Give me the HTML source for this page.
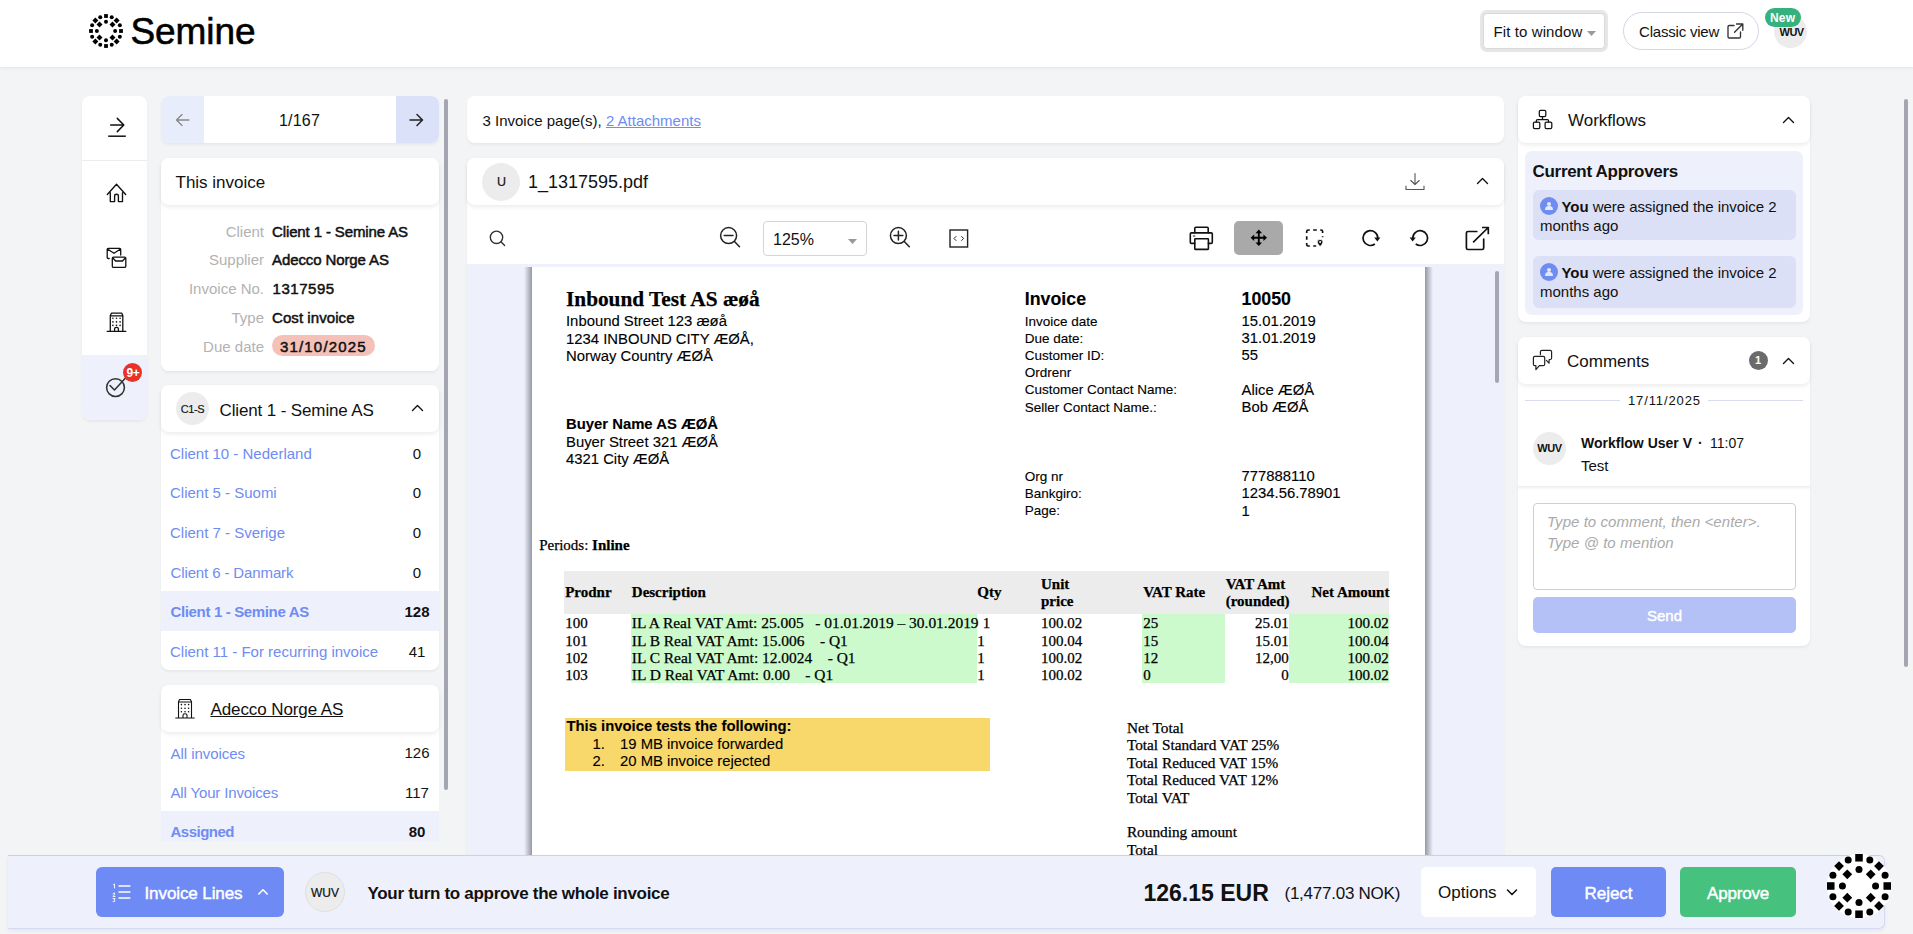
<!DOCTYPE html>
<html><head><meta charset="utf-8">
<style>
*{box-sizing:border-box;margin:0;padding:0}
html,body{width:1913px;height:934px;overflow:hidden;background:#f3f4f6;font-family:"Liberation Sans",sans-serif;color:#111}
.abs{position:absolute}
.t{position:absolute;white-space:nowrap;line-height:1}
.card{position:absolute;background:#fff;border-radius:8px;box-shadow:0 2px 3px rgba(0,0,0,0.05)}
.hc{position:absolute;background:#fff;border-radius:8px;box-shadow:0 2px 4px rgba(0,0,0,0.08)}
#hdr{position:absolute;left:0;top:0;width:1913px;height:67px;background:#fff;box-shadow:0 1px 3px rgba(0,0,0,0.07)}
svg{display:block;position:absolute;overflow:visible}
.ic{fill:none;stroke:#111;stroke-width:1.2;stroke-linecap:round;stroke-linejoin:round}
.p{position:absolute;white-space:nowrap;line-height:1;color:#000}
.ps{font-family:"Liberation Sans",sans-serif;-webkit-text-stroke:0.12px #000}
.pr{font-family:"Liberation Serif",serif;-webkit-text-stroke:0.25px #000}
.lbl{color:#b2b2b2;font-size:15px;text-align:right;width:100px}
.val{font-size:15px;color:#111;-webkit-text-stroke:0.5px #111}
.lnk{color:#6e8cf2;font-size:15px}
.cnt{font-size:15px;color:#111;text-align:center;width:40px}
</style></head><body>

<!-- HEADER -->
<div id="hdr">
  <svg style="left:89px;top:14px" width="34" height="34" viewBox="-17 -17 34 34"><g><rect x="-1.90" y="-16.90" width="3.8" height="3.8"/><circle cx="5.74" cy="-13.86" r="2.0"/><path d="M10.61 -13.61L13.61 -10.61L10.61 -7.61L7.61 -10.61Z"/><circle cx="13.86" cy="-5.74" r="2.0"/><rect x="13.10" y="-1.90" width="3.8" height="3.8"/><circle cx="13.86" cy="5.74" r="2.0"/><path d="M10.61 7.61L13.61 10.61L10.61 13.61L7.61 10.61Z"/><circle cx="5.74" cy="13.86" r="2.0"/><rect x="-1.90" y="13.10" width="3.8" height="3.8"/><circle cx="-5.74" cy="13.86" r="2.0"/><path d="M-10.61 7.61L-7.61 10.61L-10.61 13.61L-13.61 10.61Z"/><circle cx="-13.86" cy="5.74" r="2.0"/><rect x="-16.90" y="-1.90" width="3.8" height="3.8"/><circle cx="-13.86" cy="-5.74" r="2.0"/><path d="M-10.61 -13.61L-7.61 -10.61L-10.61 -7.61L-13.61 -10.61Z"/><circle cx="-5.74" cy="-13.86" r="2.0"/><circle cx="0.00" cy="-9.15" r="2.0"/><path d="M6.47 -9.47L9.47 -6.47L6.47 -3.47L3.47 -6.47Z"/><circle cx="9.15" cy="-0.00" r="2.0"/><path d="M6.47 3.47L9.47 6.47L6.47 9.47L3.47 6.47Z"/><circle cx="0.00" cy="9.15" r="2.0"/><path d="M-6.47 3.47L-3.47 6.47L-6.47 9.47L-9.47 6.47Z"/><circle cx="-9.15" cy="0.00" r="2.0"/><path d="M-6.47 -9.47L-3.47 -6.47L-6.47 -3.47L-9.47 -6.47Z"/></g></svg>
  <div class="t" style="left:130.5px;top:13px;font-size:37px;color:#000;-webkit-text-stroke:0.6px #000;letter-spacing:-0.1px">Semine</div>

  <div class="abs" style="left:1480px;top:10px;width:128px;height:42px;border-radius:7px;background:#e6e6e6"></div>
  <div class="abs" style="left:1483px;top:13px;width:122px;height:36px;border-radius:4px;background:#fff;border:1px solid #d9d9d9"></div>
  <div class="t" style="left:1493.5px;top:24px;font-size:15px;letter-spacing:0.1px">Fit to window</div>
  <svg style="left:1587px;top:31px" width="9" height="5"><path d="M0 0H9L4.5 5Z" fill="#999"/></svg>

  <div class="abs" style="left:1623px;top:12px;width:136px;height:38px;border-radius:19px;border:1px solid #d3d7e6;background:#fff"></div>
  <div class="t" style="left:1639px;top:23.5px;font-size:15px;letter-spacing:-0.2px">Classic view</div>
  <svg class="ic" style="left:1727px;top:23px" width="17" height="16" viewBox="0 0 17 16"><path d="M7 2.5H2.2Q1 2.5 1 3.7V13.8Q1 15 2.2 15H12.3Q13.5 15 13.5 13.8V9" stroke="#333" stroke-width="1.35"/><path d="M9.5 1H15.8V7.3M15.5 1.3L7.5 9.3" stroke="#333" stroke-width="1.35"/></svg>

  <div class="abs" style="left:1774px;top:15px;width:33px;height:33px;border-radius:50%;background:#ececec"></div>
  <div class="t" style="left:1779.5px;top:27px;font-size:11px;font-weight:bold;letter-spacing:-0.5px">WUV</div>
  <div class="abs" style="left:1765px;top:8px;width:36px;height:19px;border-radius:10px;background:#36b07c"></div>
  <div class="t" style="left:1770px;top:12px;font-size:12px;font-weight:bold;color:#fff;letter-spacing:0.2px">New</div>
</div>

<!-- LEFT ICON SIDEBAR -->
<div class="card" style="left:82px;top:96px;width:65px;height:324px;overflow:hidden">
  <div class="abs" style="left:0;top:64px;width:65px;height:1px;background:#ececec"></div>
  <div class="abs" style="left:0;top:259px;width:65px;height:65px;background:#eef0fb"></div>
</div>
<svg class="ic" style="left:100px;top:110px" width="35" height="35" viewBox="0 0 35 35"><path d="M8.2 26.2H25.8" stroke-width="1.5" stroke-linecap="butt"/><path d="M10.7 15H23.8M17.3 8.4L23.8 15L17.3 21.6" stroke-width="1.5"/></svg>
<svg class="ic" style="left:100px;top:175px" width="35" height="35" viewBox="0 0 35 35"><path d="M7.3 19.5L16.5 9.2L25.7 19.5M10.3 17.6V26.6H14.6V21Q14.6 19.2 16.5 19.2Q18.4 19.2 18.4 21V26.6H22.5V17.6" stroke-width="1.35"/></svg>
<svg class="ic" style="left:100px;top:240px" width="35" height="35" viewBox="0 0 35 35"><path d="M9.2 18.5H8.2Q7.2 18.5 7.2 17.5V9.3Q7.2 8.3 8.2 8.3H19.7Q20.7 8.3 20.7 9.3V15M7.4 9L14 13.3L20.5 9" stroke-width="1.3"/><rect x="12.3" y="17.1" width="13.5" height="10.3" rx="1.2" stroke-width="1.3"/><path d="M12.6 17.7L15.6 21H22.5L25.5 17.7" stroke-width="1.3"/></svg>
<svg class="ic" style="left:100px;top:305px" width="35" height="35" viewBox="0 0 35 35"><path d="M7.2 26.4H25.8M10.3 26.4V10.5L11.4 8.2H21.8L22.8 10.5V26.4M10.5 10.8H22.6M14.6 26.4V23.8Q14.6 22.3 16.5 22.3Q18.4 22.3 18.4 23.8V26.4" stroke-width="1.3"/><g fill="#111" stroke="none"><circle cx="12.9" cy="13.3" r="0.8"/><circle cx="16.5" cy="13.3" r="0.8"/><circle cx="20.1" cy="13.3" r="0.8"/><circle cx="12.9" cy="16.9" r="0.8"/><circle cx="16.5" cy="16.9" r="0.8"/><circle cx="20.1" cy="16.9" r="0.8"/><circle cx="12.9" cy="20.4" r="0.8"/><circle cx="16.5" cy="20.4" r="0.8"/><circle cx="20.1" cy="20.4" r="0.8"/></g></svg>
<svg class="ic" style="left:98px;top:360px" width="50" height="50" viewBox="0 0 50 50"><circle cx="17.5" cy="27.6" r="8.9" stroke="#333" stroke-width="1.55"/><path d="M12 25.5L16.5 30L27.5 18" stroke="#333" stroke-width="1.55"/></svg>
<div class="abs" style="left:123px;top:362.5px;width:19px;height:19px;border-radius:50%;background:#e63228"></div>
<div class="t" style="left:123.5px;top:366.5px;width:19px;text-align:center;font-size:12px;font-weight:bold;color:#fff;letter-spacing:-0.3px">9+</div>

<!-- NAV -->
<div class="card" style="left:161px;top:96px;width:278px;height:47px;overflow:hidden">
  <div class="abs" style="left:0;top:0;width:43px;height:47px;background:#e8edfb"></div>
  <div class="abs" style="left:235px;top:0;width:43px;height:47px;background:#dbe1f8"></div>
</div>
<svg class="ic" style="left:175px;top:113px" width="15" height="14" viewBox="0 0 15 14"><path d="M14 7H1.5M7 1.5L1.5 7L7 12.5" stroke="#888" stroke-width="1.3"/></svg>
<svg class="ic" style="left:409px;top:113px" width="15" height="14" viewBox="0 0 15 14"><path d="M1 7H13.5M8 1.5L13.5 7L8 12.5" stroke="#222" stroke-width="1.5"/></svg>
<div class="t" style="left:279px;top:113px;font-size:16px;letter-spacing:0.2px">1/167</div>

<!-- THIS INVOICE -->
<div class="card" style="left:161px;top:158px;width:278px;height:213px"></div>
<div class="hc" style="left:161px;top:158px;width:278px;height:47px"></div>
<div class="t" style="left:175.5px;top:174px;font-size:17px">This invoice</div>
<div class="t lbl" style="left:164px;top:224px">Client</div><div class="t val" style="left:272px;top:224px;letter-spacing:-0.12px">Client 1 - Semine AS</div>
<div class="t lbl" style="left:164px;top:252px">Supplier</div><div class="t val" style="left:272px;top:252px;letter-spacing:-0.1px">Adecco Norge AS</div>
<div class="t lbl" style="left:164px;top:281px">Invoice No.</div><div class="t val" style="left:272.5px;top:281px;letter-spacing:0.55px">1317595</div>
<div class="t lbl" style="left:164px;top:310px">Type</div><div class="t val" style="left:272px;top:310px;letter-spacing:0.07px">Cost invoice</div>
<div class="t lbl" style="left:164px;top:339px">Due date</div>
<div class="abs" style="left:272px;top:335px;width:103px;height:21px;border-radius:11px;background:#f5c0b7"></div>
<div class="t val" style="left:280px;top:339px;letter-spacing:1.17px">31/10/2025</div>

<!-- CLIENT -->
<div class="card" style="left:161px;top:385px;width:278px;height:285px;overflow:hidden">
  <div class="abs" style="left:0;top:206px;width:278px;height:40px;background:#eef0fb"></div>
</div>
<div class="hc" style="left:161px;top:385px;width:278px;height:47px"></div>
<div class="abs" style="left:176px;top:392px;width:33px;height:33px;border-radius:50%;background:#ececec"></div>
<div class="t" style="left:176px;top:403.5px;width:33px;text-align:center;font-size:11px;letter-spacing:-0.4px;-webkit-text-stroke:0.15px #111">C1-S</div>
<div class="t" style="left:219.5px;top:402px;font-size:17px;letter-spacing:-0.13px">Client 1 - Semine AS</div>
<svg class="ic" style="left:411px;top:404px" width="13" height="8" viewBox="0 0 13 8"><path d="M1.5 6.5L6.5 1.5L11.5 6.5" stroke-width="1.4"/></svg>
<div class="t lnk" style="left:170px;top:446px">Client 10 - Nederland</div><div class="t cnt" style="left:397px;top:446px">0</div>
<div class="t lnk" style="left:170px;top:485px">Client 5 - Suomi</div><div class="t cnt" style="left:397px;top:485px">0</div>
<div class="t lnk" style="left:170px;top:525px">Client 7 - Sverige</div><div class="t cnt" style="left:397px;top:525px">0</div>
<div class="t lnk" style="left:170.5px;top:565px;letter-spacing:-0.12px">Client 6 - Danmark</div><div class="t cnt" style="left:397px;top:565px">0</div>
<div class="t lnk" style="left:170.5px;top:604px;font-weight:bold;letter-spacing:-0.35px">Client 1 - Semine AS</div><div class="t cnt" style="left:397px;top:604px;font-weight:bold">128</div>
<div class="t lnk" style="left:170px;top:644px">Client 11 - For recurring invoice</div><div class="t cnt" style="left:397px;top:644px">41</div>

<!-- SUPPLIER -->
<div class="card" style="left:161px;top:685px;width:278px;height:156px;overflow:hidden;border-radius:8px 8px 0 0;box-shadow:none">
  <div class="abs" style="left:0;top:126px;width:278px;height:40px;background:#eef0fb"></div>
</div>
<div class="hc" style="left:161px;top:685px;width:278px;height:47px"></div>
<svg class="ic" style="left:168px;top:691px" width="35" height="35" viewBox="0 0 35 35"><path d="M7.7 27H26.3M10.5 27V10.8L11.6 8.5H22.4L23.5 10.8V27M10.7 11H23.3M15 27V24.2Q15 22.8 17 22.8Q19 22.8 19 24.2V27" stroke-width="1.1"/><g fill="#111" stroke="none"><circle cx="13.4" cy="13.6" r="0.8"/><circle cx="17" cy="13.6" r="0.8"/><circle cx="20.6" cy="13.6" r="0.8"/><circle cx="13.4" cy="17.2" r="0.8"/><circle cx="17" cy="17.2" r="0.8"/><circle cx="20.6" cy="17.2" r="0.8"/><circle cx="13.4" cy="20.7" r="0.8"/><circle cx="17" cy="20.7" r="0.8"/><circle cx="20.6" cy="20.7" r="0.8"/></g></svg>
<div class="t" style="left:210.5px;top:701px;font-size:17px;text-decoration:underline;letter-spacing:-0.1px">Adecco Norge AS</div>
<div class="t lnk" style="left:170.5px;top:746px;letter-spacing:-0.05px">All invoices</div><div class="t cnt" style="left:397px;top:745px">126</div>
<div class="t lnk" style="left:170.5px;top:785px;letter-spacing:-0.15px">All Your Invoices</div><div class="t cnt" style="left:397px;top:785px">117</div>
<div class="t lnk" style="left:170.5px;top:824px;font-weight:bold;letter-spacing:-0.5px">Assigned</div><div class="t cnt" style="left:397px;top:824px;font-weight:bold">80</div>

<div class="abs" style="left:444px;top:99px;width:4px;height:691px;border-radius:2px;background:#a3a6b0"></div>

<!-- MIDDLE -->
<div class="card" style="left:467px;top:96px;width:1037px;height:47px"></div>
<div class="t" style="left:482.5px;top:113px;font-size:15px">3 Invoice page(s), <span style="color:#6e8cf2;text-decoration:underline">2 Attachments</span></div>
<div class="card" style="left:467px;top:158px;width:1037px;height:697px;border-radius:8px 8px 0 0;overflow:hidden">
  <div class="abs" style="left:0;top:106px;width:1037px;height:600px;background:#eef0fb"></div>
  <div class="abs" style="left:57px;top:109px;width:8px;height:600px;background:linear-gradient(to right,rgba(140,143,155,0),rgba(140,143,155,0.9))"></div>
  <div class="abs" style="left:958px;top:109px;width:8px;height:600px;background:linear-gradient(to left,rgba(140,143,155,0),rgba(140,143,155,0.9))"></div>
  <div class="abs" style="left:65px;top:109px;width:893px;height:600px;background:#fff"></div>
  <div class="abs" style="left:1028px;top:113px;width:4px;height:112px;border-radius:2px;background:#a5a8b3"></div>
</div>
<div class="hc" style="left:467px;top:158px;width:1037px;height:47px"></div>
<div class="abs" style="left:482px;top:162.5px;width:38px;height:38px;border-radius:50%;background:#ececec"></div>
<div class="t" style="left:482.5px;top:175.5px;width:38px;text-align:center;font-size:12.5px;-webkit-text-stroke:0.2px #111">U</div>
<div class="t" style="left:528px;top:173px;font-size:18px">1_1317595.pdf</div>
<svg class="ic" style="left:1405px;top:172px" width="20" height="20" viewBox="0 0 20 20"><path d="M10 1.5V12.5M5.8 8.5L10 12.5L14.2 8.5M1 14V17.5H19V14" stroke="#555" stroke-width="1.1"/></svg>
<svg class="ic" style="left:1476px;top:177px" width="13" height="8" viewBox="0 0 13 8"><path d="M1.5 6.5L6.5 1.5L11.5 6.5" stroke-width="1.4"/></svg>
<!-- toolbar -->
<svg class="ic" style="left:480px;top:220px" width="40" height="40" viewBox="0 0 40 40"><circle cx="16.5" cy="17.3" r="6.2" stroke="#333" stroke-width="1.4"/><path d="M21.2 22L24.6 25.4" stroke="#333" stroke-width="1.4"/></svg>
<svg class="ic" style="left:710px;top:218px" width="40" height="40" viewBox="0 0 40 40"><circle cx="18.6" cy="17.6" r="8" stroke="#222" stroke-width="1.5"/><path d="M24.5 23.5L29.5 28.8M14.2 17.6H23" stroke="#222" stroke-width="1.5"/></svg>
<div class="abs" style="left:763px;top:221px;width:104px;height:35px;border-radius:4px;border:1px solid #d5d5d5;background:#fff"></div>
<div class="t" style="left:773px;top:232px;font-size:16px">125%</div>
<svg style="left:848px;top:239px" width="9" height="5"><path d="M0 0H9L4.5 5Z" fill="#999"/></svg>
<svg class="ic" style="left:879px;top:218px" width="40" height="40" viewBox="0 0 40 40"><circle cx="19.4" cy="17.6" r="8" stroke="#222" stroke-width="1.5"/><path d="M25.3 23.5L30.3 28.8M15 17.6H23.8M19.4 13.2V22" stroke="#222" stroke-width="1.5"/></svg>
<svg class="ic" style="left:940px;top:220px" width="40" height="40" viewBox="0 0 40 40"><rect x="10" y="10" width="17.6" height="17" stroke="#222" stroke-width="1.4" stroke-linejoin="miter"/><path d="M16 16.5L14 18.5L16 20.5M21.6 16.5L23.6 18.5L21.6 20.5" stroke="#222" stroke-width="1"/></svg>

<svg class="ic" style="left:1180px;top:215px" width="40" height="40" viewBox="0 0 40 40"><path d="M14.8 17.8V13.2Q14.8 12.2 15.8 12.2H27.2Q28.2 12.2 28.2 13.2V17.8" stroke-width="1.6"/><path d="M14.6 28.4H11.4Q10.3 28.4 10.3 27.3V19Q10.3 17.9 11.4 17.9H31.2Q32.3 17.9 32.3 19V27.3Q32.3 28.4 31.2 28.4H28.4" stroke-width="1.6"/><rect x="14.8" y="23.8" width="13.6" height="10.6" rx="0.6" stroke-width="1.6"/><path d="M13.4 21H14.8" stroke-width="1.2"/></svg>
<div class="abs" style="left:1234px;top:221px;width:49px;height:34px;border-radius:5px;background:#a9a9a9"></div>
<svg style="left:1244px;top:223px" width="30" height="30" viewBox="0 0 30 30"><path d="M14.8 9V20.6M9 14.8H20.6" stroke="#000" stroke-width="1.9" fill="none"/><path d="M14.8 6.6L11.5 10.2H18.1ZM14.8 23L11.5 19.4H18.1ZM6.6 14.8L10.2 11.5V18.1ZM23 14.8L19.4 11.5V18.1Z" fill="#000"/></svg>
<svg class="ic" style="left:1300px;top:222px" width="30" height="30" viewBox="0 0 30 30"><path d="M6.7 11V9.5Q6.7 8 8.2 8H9.8M13.2 8H16.8M20.2 8H21.1Q22.6 8 22.6 9.5V11M6.7 14.2V17.8M6.7 21V22.5Q6.7 24 8.2 24H9.8M13.2 24H16.2M22.6 14.2V15.2" stroke-width="1.7" stroke-linecap="butt"/><path d="M20.1 17.3Q17.2 17.3 17.2 20.1Q17.2 21.9 20.1 24.6Q23 21.9 23 20.1Q23 17.3 20.1 17.3Z" fill="#111" stroke="#fff" stroke-width="0.8"/><circle cx="20.1" cy="20.1" r="1" fill="#fff" stroke="none"/></svg>
<svg class="ic" style="left:1350px;top:215px" width="90" height="47" viewBox="0 0 90 47"><path d="M24.85 29A7.4 7.4 0 1 1 27.8 23.1" stroke-width="1.7" stroke-linecap="butt"/><path d="M24.2 22.6H30.4L27.4 26.6Z" fill="#111" stroke="none"/><path d="M65.75 29A7.4 7.4 0 1 0 62.8 23.1" stroke-width="1.7" stroke-linecap="butt"/><path d="M59.6 22.6H65.8L62.6 26.6Z" fill="#111" stroke="none"/></svg>
<svg class="ic" style="left:1450px;top:215px" width="40" height="40" viewBox="0 0 40 40"><path d="M26.8 16.5H18Q16.4 16.5 16.4 18V33Q16.4 34.5 18 34.5H32.1Q33.7 34.5 33.7 33V24" stroke-width="1.7"/><path d="M23.1 27.4L38.3 12.5M32 12.5H38.3V19.3" stroke-width="1.7" stroke-linecap="butt"/></svg>


<!-- PDF -->
<div id="pdf">
<div class="p pr" style="top:288.5px;font-size:21.3px;font-weight:bold;left:566.0px;">Inbound Test AS æøå</div>
<div class="p ps" style="top:314.0px;font-size:14.85px;left:566.0px;">Inbound Street 123 æøå</div>
<div class="p ps" style="top:332.0px;font-size:14.85px;left:566.0px;">1234 INBOUND CITY ÆØÅ,</div>
<div class="p ps" style="top:349.1px;font-size:14.85px;left:566.0px;">Norway Country ÆØÅ</div>
<div class="p ps" style="top:417.4px;font-size:14.85px;font-weight:bold;left:566.0px;">Buyer Name AS ÆØÅ</div>
<div class="p ps" style="top:435.1px;font-size:14.85px;left:566.0px;">Buyer Street 321 ÆØÅ</div>
<div class="p ps" style="top:452.1px;font-size:14.85px;left:566.0px;">4321 City ÆØÅ</div>
<div class="p pr" style="top:537.7px;font-size:15px;left:539.2px;">Periods: <b>Inline</b></div>
<div class="p ps" style="top:290.9px;font-size:17.8px;font-weight:bold;left:1024.8px;">Invoice</div>
<div class="p ps" style="top:290.9px;font-size:17.8px;font-weight:bold;left:1241.5px;">10050</div>
<div class="p ps" style="top:314.5px;font-size:13.5px;left:1024.8px;">Invoice date</div>
<div class="p ps" style="top:314.1px;font-size:14.85px;left:1241.5px;">15.01.2019</div>
<div class="p ps" style="top:331.5px;font-size:13.5px;left:1024.8px;">Due date:</div>
<div class="p ps" style="top:331.1px;font-size:14.85px;left:1241.5px;">31.01.2019</div>
<div class="p ps" style="top:348.6px;font-size:13.5px;left:1024.8px;">Customer ID:</div>
<div class="p ps" style="top:348.2px;font-size:14.85px;left:1241.5px;">55</div>
<div class="p ps" style="top:366.3px;font-size:13.5px;left:1024.8px;">Ordrenr</div>
<div class="p ps" style="top:383.4px;font-size:13.5px;left:1024.8px;">Customer Contact Name:</div>
<div class="p ps" style="top:383.0px;font-size:14.85px;left:1241.5px;">Alice ÆØÅ</div>
<div class="p ps" style="top:400.7px;font-size:13.5px;left:1024.8px;">Seller Contact Name.:</div>
<div class="p ps" style="top:400.3px;font-size:14.85px;left:1241.5px;">Bob ÆØÅ</div>
<div class="p ps" style="top:469.6px;font-size:13.5px;left:1024.8px;">Org nr</div>
<div class="p ps" style="top:469.2px;font-size:14.85px;left:1241.5px;">777888110</div>
<div class="p ps" style="top:486.7px;font-size:13.5px;left:1024.8px;">Bankgiro:</div>
<div class="p ps" style="top:486.3px;font-size:14.85px;left:1241.5px;">1234.56.78901</div>
<div class="p ps" style="top:504.4px;font-size:13.5px;left:1024.8px;">Page:</div>
<div class="p ps" style="top:504.0px;font-size:14.85px;left:1241.5px;">1</div>
<div class="abs" style="left:564px;top:571px;width:825px;height:43px;background:#ececec"></div>
<div class="abs" style="left:631px;top:614px;width:346px;height:69px;background:#ccfacc"></div>
<div class="abs" style="left:1142px;top:614px;width:83px;height:69px;background:#ccfacc"></div>
<div class="abs" style="left:1289px;top:614px;width:100px;height:69px;background:#ccfacc"></div>
<div class="p pr" style="top:585.4px;font-size:15px;font-weight:bold;left:565.2px;">Prodnr</div>
<div class="p pr" style="top:585.4px;font-size:15px;font-weight:bold;left:631.8px;">Description</div>
<div class="p pr" style="top:585.4px;font-size:15px;font-weight:bold;left:977.3px;">Qty</div>
<div class="p pr" style="top:577.4px;font-size:15px;font-weight:bold;left:1041.0px;">Unit</div>
<div class="p pr" style="top:594.3px;font-size:15px;font-weight:bold;left:1041.0px;">price</div>
<div class="p pr" style="top:585.4px;font-size:15px;font-weight:bold;left:1143.2px;">VAT Rate</div>
<div class="p pr" style="top:577.4px;font-size:15px;font-weight:bold;left:1225.7px;">VAT Amt</div>
<div class="p pr" style="top:594.3px;font-size:15px;font-weight:bold;left:1225.7px;">(rounded)</div>
<div class="p pr" style="top:585.4px;font-size:15px;font-weight:bold;left:1311.5px;">Net Amount</div>
<div class="p pr" style="top:616.4px;font-size:15px;left:565.2px;">100</div>
<div class="p pr" style="top:615.2px;font-size:15.45px;left:631.8px;white-space:pre;">IL A Real VAT Amt: 25.005   - 01.01.2019 – 30.01.2019</div>
<div class="p pr" style="top:616.4px;font-size:15px;left:982.8px;">1</div>
<div class="p pr" style="top:616.4px;font-size:15px;left:1041.0px;">100.02</div>
<div class="p pr" style="top:616.4px;font-size:15px;left:1143.2px;">25</div>
<div class="p pr" style="top:616.4px;font-size:15px;right:624.3px;">25.01</div>
<div class="p pr" style="top:616.4px;font-size:15px;right:524.3px;">100.02</div>
<div class="p pr" style="top:633.8px;font-size:15px;left:565.2px;">101</div>
<div class="p pr" style="top:632.6px;font-size:15.45px;left:631.8px;white-space:pre;">IL B Real VAT Amt: 15.006    - Q1</div>
<div class="p pr" style="top:633.8px;font-size:15px;left:977.3px;">1</div>
<div class="p pr" style="top:633.8px;font-size:15px;left:1041.0px;">100.04</div>
<div class="p pr" style="top:633.8px;font-size:15px;left:1143.2px;">15</div>
<div class="p pr" style="top:633.8px;font-size:15px;right:624.3px;">15.01</div>
<div class="p pr" style="top:633.8px;font-size:15px;right:524.3px;">100.04</div>
<div class="p pr" style="top:650.9px;font-size:15px;left:565.2px;">102</div>
<div class="p pr" style="top:649.7px;font-size:15.45px;left:631.8px;white-space:pre;">IL C Real VAT Amt: 12.0024    - Q1</div>
<div class="p pr" style="top:650.9px;font-size:15px;left:977.3px;">1</div>
<div class="p pr" style="top:650.9px;font-size:15px;left:1041.0px;">100.02</div>
<div class="p pr" style="top:650.9px;font-size:15px;left:1143.2px;">12</div>
<div class="p pr" style="top:650.9px;font-size:15px;right:624.3px;">12,00</div>
<div class="p pr" style="top:650.9px;font-size:15px;right:524.3px;">100.02</div>
<div class="p pr" style="top:667.9px;font-size:15px;left:565.2px;">103</div>
<div class="p pr" style="top:666.7px;font-size:15.45px;left:631.8px;white-space:pre;">IL D Real VAT Amt: 0.00    - Q1</div>
<div class="p pr" style="top:667.9px;font-size:15px;left:977.3px;">1</div>
<div class="p pr" style="top:667.9px;font-size:15px;left:1041.0px;">100.02</div>
<div class="p pr" style="top:667.9px;font-size:15px;left:1143.2px;">0</div>
<div class="p pr" style="top:667.9px;font-size:15px;right:624.3px;">0</div>
<div class="p pr" style="top:667.9px;font-size:15px;right:524.3px;">100.02</div>
<div class="abs" style="left:564.5px;top:718px;width:425px;height:52.5px;background:#f9d86b"></div>
<div class="p ps" style="top:719.4px;font-size:14.85px;font-weight:bold;left:566.4px;">This invoice tests the following:</div>
<div class="p ps" style="top:737.4px;font-size:14.85px;left:592.4px;">1.</div>
<div class="p ps" style="top:737.4px;font-size:14.85px;left:620.0px;">19 MB invoice forwarded</div>
<div class="p ps" style="top:754.2px;font-size:14.85px;left:592.4px;">2.</div>
<div class="p ps" style="top:754.2px;font-size:14.85px;left:620.0px;">20 MB invoice rejected</div>
<div class="p pr" style="top:719.5px;font-size:15.3px;left:1126.9px;">Net Total</div>
<div class="p pr" style="top:737.4px;font-size:15.3px;left:1126.9px;">Total Standard VAT 25%</div>
<div class="p pr" style="top:754.6px;font-size:15.3px;left:1126.9px;">Total Reduced VAT 15%</div>
<div class="p pr" style="top:772.0px;font-size:15.3px;left:1126.9px;">Total Reduced VAT 12%</div>
<div class="p pr" style="top:789.6px;font-size:15.3px;left:1126.9px;">Total VAT</div>
<div class="p pr" style="top:823.6px;font-size:15.3px;left:1126.9px;">Rounding amount</div>
<div class="p pr" style="top:841.5px;font-size:15.3px;left:1126.9px;">Total</div>
</div>
<!-- RIGHT -->
<div class="card" style="left:1518px;top:96px;width:292px;height:226px"></div>
<div class="hc" style="left:1518px;top:96px;width:292px;height:47px"></div>
<svg class="ic" style="left:1525px;top:100px" width="40" height="40" viewBox="0 0 40 40"><rect x="14.3" y="10.3" width="6.5" height="6.2" rx="1.3" stroke-width="1.25"/><rect x="8.4" y="22" width="6.4" height="6.5" rx="1.3" stroke-width="1.25"/><rect x="20.1" y="22" width="6.7" height="6.5" rx="1.3" stroke-width="1.25"/><path d="M17.5 16.5V19.7M11.3 22V21Q11.3 19.7 12.6 19.7H22.3Q23.6 19.7 23.6 21V22" stroke-width="1.25"/></svg>
<div class="t" style="left:1568px;top:112px;font-size:17px">Workflows</div>
<svg class="ic" style="left:1782px;top:116px" width="13" height="8" viewBox="0 0 13 8"><path d="M1.5 6.5L6.5 1.5L11.5 6.5" stroke-width="1.4"/></svg>
<div class="abs" style="left:1525px;top:151px;width:278px;height:164px;border-radius:7px;background:#eef0fb"></div>
<div class="t" style="left:1532.5px;top:163px;font-size:17px;font-weight:bold;letter-spacing:-0.3px">Current Approvers</div>
<div class="abs" style="left:1533px;top:190px;width:263px;height:50px;border-radius:6px;background:#dce0f6"></div>
<div class="abs" style="left:1533px;top:256px;width:263px;height:52px;border-radius:6px;background:#dce0f6"></div>
<div class="abs" style="left:1539.5px;top:197px;width:18px;height:18px;border-radius:50%;background:#6e8cf2;overflow:hidden"><div class="abs" style="left:7.5px;top:4.6px;width:4px;height:4px;border-radius:50%;background:#e3e8fc"></div><div class="abs" style="left:5.5px;top:8.9px;width:8px;height:3.9px;border-radius:4px 4px 0.5px 0.5px;background:#e3e8fc"></div></div>
<div class="t" style="left:1561.5px;top:197.5px;font-size:15px;line-height:18px;letter-spacing:-0.05px"><b>You</b> were assigned the invoice 2</div>
<div class="t" style="left:1540px;top:216.5px;font-size:15px;line-height:18px">months ago</div>
<div class="abs" style="left:1539.5px;top:263px;width:18px;height:18px;border-radius:50%;background:#6e8cf2;overflow:hidden"><div class="abs" style="left:7.5px;top:4.6px;width:4px;height:4px;border-radius:50%;background:#e3e8fc"></div><div class="abs" style="left:5.5px;top:8.9px;width:8px;height:3.9px;border-radius:4px 4px 0.5px 0.5px;background:#e3e8fc"></div></div>
<div class="t" style="left:1561.5px;top:263.5px;font-size:15px;line-height:18px;letter-spacing:-0.05px"><b>You</b> were assigned the invoice 2</div>
<div class="t" style="left:1540px;top:283px;font-size:15px;line-height:18px">months ago</div>

<div class="card" style="left:1518px;top:337px;width:292px;height:309px"></div>
<div class="hc" style="left:1518px;top:337px;width:292px;height:47px"></div>
<svg class="ic" style="left:1525px;top:340px" width="40" height="40" viewBox="0 0 40 40"><path d="M15.4 14.6V11.8Q15.4 10.3 16.9 10.3H25.1Q26.6 10.3 26.6 11.8V18Q26.6 19.5 25.1 19.5H24.2L24 23.1L21.4 20.4" stroke="#222" stroke-width="1.2"/><path d="M9.9 16.3H18.2Q19.7 16.3 19.7 17.8V24.2Q19.7 25.7 18.2 25.7H14.4L10.9 29.6V25.7H9.9Q8.4 25.7 8.4 24.2V17.8Q8.4 16.3 9.9 16.3Z" stroke="#222" stroke-width="1.2"/></svg>
<div class="t" style="left:1567px;top:353px;font-size:17px">Comments</div>
<div class="abs" style="left:1748.5px;top:351px;width:19px;height:19px;border-radius:50%;background:#6b6b6b"></div>
<div class="t" style="left:1748.5px;top:355px;width:19px;text-align:center;font-size:11px;font-weight:bold;color:#fff">1</div>
<svg class="ic" style="left:1782px;top:357px" width="13" height="8" viewBox="0 0 13 8"><path d="M1.5 6.5L6.5 1.5L11.5 6.5" stroke-width="1.4"/></svg>
<div class="abs" style="left:1525px;top:400px;width:95px;height:1px;background:#d9dcec"></div>
<div class="abs" style="left:1708px;top:400px;width:95px;height:1px;background:#d9dcec"></div>
<div class="t" style="left:1620px;top:393.5px;width:88px;text-align:center;font-size:13px;letter-spacing:0.9px;text-indent:0.9px">17/11/2025</div>
<div class="abs" style="left:1533px;top:431.5px;width:33px;height:33px;border-radius:50%;background:#ececec"></div>
<div class="t" style="left:1533px;top:443px;width:33px;text-align:center;font-size:11px;font-weight:bold;letter-spacing:-0.4px">WUV</div>
<div class="t" style="left:1581px;top:435.5px;font-size:14px;font-weight:bold">Workflow User V</div>
<div class="t" style="left:1698px;top:435.5px;font-size:14px;font-weight:bold">·</div>
<div class="t" style="left:1710px;top:435.5px;font-size:14px">11:07</div>
<div class="t" style="left:1581px;top:457.5px;font-size:15px">Test</div>
<div class="abs" style="left:1518px;top:486px;width:292px;height:4px;background:linear-gradient(rgba(0,0,0,0.07),rgba(0,0,0,0))"></div>
<div class="abs" style="left:1533px;top:503px;width:263px;height:87px;border-radius:4px;border:1px solid #cfcfcf;background:#fff"></div>
<div class="t" style="left:1547px;top:510.5px;font-size:15px;font-style:italic;color:#aaa;line-height:21px;letter-spacing:0.05px">Type to comment, then &lt;enter&gt;.<br>Type @ to mention</div>
<div class="abs" style="left:1533px;top:597px;width:263px;height:36px;border-radius:5px;background:#b3c1f6"></div>
<div class="t" style="left:1533px;top:608px;width:263px;text-align:center;font-size:15px;color:#fff;-webkit-text-stroke:0.45px #fff">Send</div>

<div class="abs" style="left:1904px;top:99px;width:4px;height:568px;border-radius:2px;background:#a3a6b0"></div>

<!-- FOOTER -->
<div class="abs" style="left:8px;top:855px;width:1877px;height:74px;background:#eef0fb;border:1px solid #d3d9f7;border-top-color:#c9d0f6;border-left:none;border-radius:0 6px 6px 0;box-shadow:0 2px 4px rgba(0,0,0,0.06)"></div>
<div class="abs" style="left:96px;top:867px;width:188px;height:50px;border-radius:6px;background:#6d8af5"></div>
<svg class="ic" style="left:110px;top:881px" width="22" height="22" viewBox="0 0 22 22"><path d="M9 5H20M9 11H20M9 17H20" stroke="#fff" stroke-width="1.3"/><path d="M3.5 3.5L4.5 3V7M3 13Q3.5 11.5 4.5 12Q5.5 13 3 15.5H5M3 17.5H5L4 19Q5.5 19.5 4.7 20.5Q4 21 3 20.5" stroke="#fff" stroke-width="0.9"/></svg>
<div class="t" style="left:144.5px;top:885px;font-size:17px;color:#fff;-webkit-text-stroke:0.45px #fff;letter-spacing:-0.1px">Invoice Lines</div>
<svg class="ic" style="left:257px;top:888px" width="12" height="8" viewBox="0 0 12 8"><path d="M1.8 6L6 1.8L10.2 6" stroke="#fff" stroke-width="1.6"/></svg>
<div class="abs" style="left:305px;top:872px;width:40px;height:40px;border-radius:50%;background:#ececec;border:1px solid #e0e0e0"></div>
<div class="t" style="left:305.5px;top:887px;width:39px;text-align:center;font-size:12px;letter-spacing:0px;-webkit-text-stroke:0.2px #111">WUV</div>
<div class="t" style="left:367.5px;top:885px;font-size:17px;font-weight:bold;letter-spacing:-0.3px">Your turn to approve the whole invoice</div>
<div class="t" style="left:1143.5px;top:882px;font-size:23px;font-weight:bold">126.15 EUR</div>
<div class="t" style="left:1284.5px;top:885px;font-size:17px;letter-spacing:-0.25px">(1,477.03 NOK)</div>
<div class="abs" style="left:1421px;top:867px;width:115px;height:50px;border-radius:5px;background:#fff"></div>
<div class="t" style="left:1438px;top:884px;font-size:17px">Options</div>
<svg class="ic" style="left:1506px;top:888px" width="12" height="9" viewBox="0 0 12 9"><path d="M1.5 2L6 6.5L10.5 2" stroke-width="1.6"/></svg>
<div class="abs" style="left:1551px;top:867px;width:115px;height:50px;border-radius:5px;background:#6d8af5"></div>
<div class="t" style="left:1551px;top:885px;width:115px;text-align:center;font-size:17px;color:#fff;-webkit-text-stroke:0.45px #fff;letter-spacing:0px">Reject</div>
<div class="abs" style="left:1680px;top:867px;width:116px;height:50px;border-radius:5px;background:#46c17e"></div>
<div class="t" style="left:1680px;top:885px;width:116px;text-align:center;font-size:17px;color:#fff;-webkit-text-stroke:0.45px #fff;letter-spacing:-0.2px">Approve</div>
<svg style="left:1827px;top:854px" width="64" height="64" viewBox="-17 -17 34 34"><circle r="17.1" fill="#fff"/><g><rect x="-2.00" y="-17.00" width="4.0" height="4.0"/><circle cx="5.74" cy="-13.86" r="1.86"/><path d="M10.61 -13.21L13.21 -10.61L10.61 -8.01L8.01 -10.61Z"/><circle cx="13.86" cy="-5.74" r="1.86"/><rect x="13.00" y="-2.00" width="4.0" height="4.0"/><circle cx="13.86" cy="5.74" r="1.86"/><path d="M10.61 8.01L13.21 10.61L10.61 13.21L8.01 10.61Z"/><circle cx="5.74" cy="13.86" r="1.86"/><rect x="-2.00" y="13.00" width="4.0" height="4.0"/><circle cx="-5.74" cy="13.86" r="1.86"/><path d="M-10.61 8.01L-8.01 10.61L-10.61 13.21L-13.21 10.61Z"/><circle cx="-13.86" cy="5.74" r="1.86"/><rect x="-17.00" y="-2.00" width="4.0" height="4.0"/><circle cx="-13.86" cy="-5.74" r="1.86"/><path d="M-10.61 -13.21L-8.01 -10.61L-10.61 -8.01L-13.21 -10.61Z"/><circle cx="-5.74" cy="-13.86" r="1.86"/><circle cx="0.00" cy="-8.80" r="1.86"/><path d="M6.22 -8.82L8.82 -6.22L6.22 -3.62L3.62 -6.22Z"/><circle cx="8.80" cy="-0.00" r="1.86"/><path d="M6.22 3.62L8.82 6.22L6.22 8.82L3.62 6.22Z"/><circle cx="0.00" cy="8.80" r="1.86"/><path d="M-6.22 3.62L-3.62 6.22L-6.22 8.82L-8.82 6.22Z"/><circle cx="-8.80" cy="0.00" r="1.86"/><path d="M-6.22 -8.82L-3.62 -6.22L-6.22 -3.62L-8.82 -6.22Z"/></g></svg>

</body></html>
